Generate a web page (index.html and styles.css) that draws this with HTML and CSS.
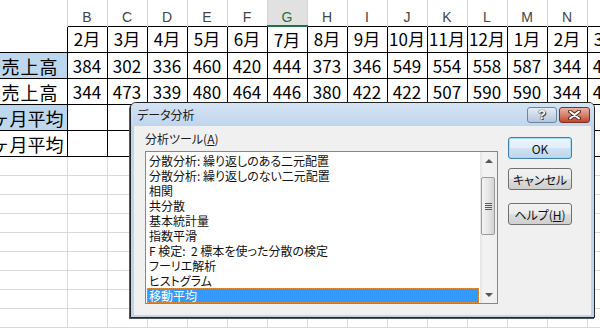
FILE: index.html
```html
<!DOCTYPE html>
<html lang="ja">
<head>
<meta charset="UTF-8" />
<title>データ分析</title>
<link rel="stylesheet" href="styles.css">
</head>
<body>

<table class="sheet">
  <colgroup><col class="col-a"><col span="14" class="col"></colgroup>
  <tr class="head">
    <th class="corner"></th><th>B</th><th>C</th><th>D</th><th>E</th><th>F</th><th class="sel">G</th><th>H</th>
    <th>I</th><th>J</th><th>K</th><th>L</th><th>M</th><th>N</th><th>O</th>
  </tr>
  <tr class="data">
    <td class="label top-open"></td><td>2月</td><td>3月</td><td>4月</td><td>5月</td><td>6月</td><td>7月</td><td>8月</td>
    <td>9月</td><td>10月</td><td>11月</td><td>12月</td><td>1月</td><td>2月</td><td>3月</td>
  </tr>
  <tr class="data">
    <td class="label fill"><div>前年売上高</div></td><td>384</td><td>302</td><td>336</td><td>460</td><td>420</td><td>444</td><td>373</td>
    <td>346</td><td>549</td><td>554</td><td>558</td><td>587</td><td>344</td><td>412</td>
  </tr>
  <tr class="data">
    <td class="label"><div>今年売上高</div></td><td>344</td><td>473</td><td>339</td><td>480</td><td>464</td><td>446</td><td>380</td>
    <td>422</td><td>422</td><td>507</td><td>590</td><td>590</td><td>344</td><td>436</td>
  </tr>
  <tr class="data">
    <td class="label avg fill"><div>3ヶ月平均</div></td><td></td><td></td><td></td><td></td><td></td><td></td><td></td>
    <td></td><td></td><td></td><td></td><td></td><td></td><td></td>
  </tr>
  <tr class="data">
    <td class="label avg"><div>6ヶ月平均</div></td><td></td><td></td><td></td><td></td><td></td><td></td><td></td>
    <td></td><td></td><td></td><td></td><td></td><td></td><td></td>
  </tr>
  <tr class="blank"><td></td><td></td><td></td><td></td><td></td><td></td><td></td><td></td><td></td><td></td><td></td><td></td><td></td><td></td><td></td></tr>
  <tr class="blank"><td></td><td></td><td></td><td></td><td></td><td></td><td></td><td></td><td></td><td></td><td></td><td></td><td></td><td></td><td></td></tr>
  <tr class="blank"><td></td><td></td><td></td><td></td><td></td><td></td><td></td><td></td><td></td><td></td><td></td><td></td><td></td><td></td><td></td></tr>
  <tr class="blank"><td></td><td></td><td></td><td></td><td></td><td></td><td></td><td></td><td></td><td></td><td></td><td></td><td></td><td></td><td></td></tr>
  <tr class="blank"><td></td><td></td><td></td><td></td><td></td><td></td><td></td><td></td><td></td><td></td><td></td><td></td><td></td><td></td><td></td></tr>
  <tr class="blank"><td></td><td></td><td></td><td></td><td></td><td></td><td></td><td></td><td></td><td></td><td></td><td></td><td></td><td></td><td></td></tr>
  <tr class="blank"><td></td><td></td><td></td><td></td><td></td><td></td><td></td><td></td><td></td><td></td><td></td><td></td><td></td><td></td><td></td></tr>
  <tr class="blank"><td></td><td></td><td></td><td></td><td></td><td></td><td></td><td></td><td></td><td></td><td></td><td></td><td></td><td></td><td></td></tr>
  <tr class="blank"><td></td><td></td><td></td><td></td><td></td><td></td><td></td><td></td><td></td><td></td><td></td><td></td><td></td><td></td><td></td></tr>
</table>

<!-- Analysis ToolPak dialog -->
<div class="dialog">
  <div class="titlebar">
    <span class="title">データ分析</span>
    <span class="tbtn help-btn">?</span>
    <span class="tbtn close-btn">
      <svg width="13" height="10" viewBox="0 0 13 10">
        <path d="M2 1.5 L11 8.5 M11 1.5 L2 8.5" stroke="#5a2a22" stroke-width="4" stroke-linecap="round"/>
        <path d="M2 1.5 L11 8.5 M11 1.5 L2 8.5" stroke="#fff" stroke-width="2" stroke-linecap="round"/>
      </svg>
    </span>
  </div>
  <div class="client">
    <div class="tools">
      <div class="tools-label">分析ツール(<u>A</u>)</div>
      <div class="listbox">
        <div class="items">
          <div class="item">分散分析: 繰り返しのある二元配置</div>
          <div class="item">分散分析: 繰り返しのない二元配置</div>
          <div class="item">相関</div>
          <div class="item">共分散</div>
          <div class="item">基本統計量</div>
          <div class="item">指数平滑</div>
          <div class="item">F 検定:&nbsp; 2 標本を使った分散の検定</div>
          <div class="item">フーリエ解析</div>
          <div class="item">ヒストグラム</div>
          <div class="item selected">移動平均</div>
        </div>
        <div class="scrollbar">
          <div class="arrow"><span class="tri up"></span></div>
          <div class="track"><div class="thumb"><span class="grip"></span></div></div>
          <div class="arrow"><span class="tri down"></span></div>
        </div>
      </div>
    </div>
    <div class="buttons">
      <div class="btn default">OK</div>
      <div class="btn">キャンセル</div>
      <div class="btn help">ヘルプ(<u>H</u>)</div>
    </div>
  </div>
</div>

</body>
</html>
```

FILE: styles.css
```css
body {
  margin: 0; width: 600px; height: 330px; overflow: hidden; position: relative;
  background: #fff; font-family: "Noto Sans CJK JP", sans-serif; color: #000;
}

/* spreadsheet */
.sheet {
  border-collapse: collapse; table-layout: fixed; width: 627px;
}
.sheet .col-a { width: 67px; }
.sheet .col { width: 40px; }
.sheet th {
  height: 15px; padding: 9px 0 0; vertical-align: top;
  font: normal 14px/16px "Liberation Sans", sans-serif; color: #444;
  border-right: 1px solid #d4d4d4;
}
.sheet th.sel {
  background: #e1e1e1; color: #217346; border-bottom: 2px solid #217346;
}
.sheet .data td {
  height: 25px; padding: 0; border: 1px solid #000;
  text-align: center; font-size: 17px; line-height: 20px; white-space: nowrap; overflow: hidden;
}
.sheet .data td.label { border-left: none; font-size: 18px; }
.sheet .data td.top-open { border-top: none; }
.sheet .data td.fill { background: #bdd7ee; }
.label div {
  display: flex; justify-content: flex-end; overflow: hidden;
  padding-right: 8px; letter-spacing: 1px;
}
.label.avg div { padding-right: 3px; letter-spacing: 0; }
.sheet .blank td {
  height: 18px; padding: 0; border-right: 1px solid #d9d9d9; border-bottom: 1px solid #d9d9d9;
}

/* dialog */
.dialog {
  position: absolute; left: 130px; top: 102px; width: 465px; height: 216px;
  box-sizing: border-box; border: 1px solid #262626; border-radius: 6px 6px 0 0;
  background: #bed4ed; display: flex; flex-direction: column; font-size: 12px;
  font-feature-settings: "palt"; box-shadow: -1px 1px 0 #555;
}
.titlebar {
  height: 23px; display: flex; align-items: center; gap: 2px; padding: 0 4px 0 6px;
  background: linear-gradient(#d5e3f3, #c0d5ed); border-radius: 5px 5px 0 0;
}
.title { flex: 1; color: #1b1b1b; }
.tbtn {
  width: 30px; height: 16px; box-sizing: border-box; border-radius: 3px;
  display: flex; align-items: center; justify-content: center;
}
.help-btn {
  border: 1px solid #71849d; color: #fff; font: bold 13px "Liberation Sans", sans-serif;
  background: linear-gradient(#e4ecf5, #cbd8e8 50%, #b5c7dd);
  text-shadow: 0 0 1px #333, 0 0 1px #333, 1px 1px 0 #445;
}
.close-btn {
  width: 31px; border: 1px solid #7c3026;
  background: linear-gradient(#eab2a5, #d8826f 50%, #c1452f);
}
.client {
  flex: 1; margin: 0 3px 2px; background: #f0f0f0;
  display: flex; gap: 10px; padding: 0 19px 0 11px;
}

.tools { width: 353px; }
.tools-label { padding-top: 4px; line-height: 18px; margin-bottom: 3px; color: #1a1a1a; }
.listbox {
  height: 153px; box-sizing: border-box; border: 1px solid #828790; background: #fff;
  display: flex;
}
.items { flex: 1; padding: 1px 1px 0 1px; }
.item {
  height: 15px; box-sizing: border-box; line-height: 13px; padding-left: 1px;
  border: 1px solid transparent; white-space: nowrap; color: #111;
}
.item.selected { background: #3399ff; color: #fff; border: 1px dotted #e69138; }

.scrollbar {
  width: 17px; display: flex; flex-direction: column;
  background: linear-gradient(to right, #e4e4e4, #f3f3f3 20%, #f0f0f0);
}
.arrow { height: 17px; display: flex; align-items: center; justify-content: center; }
.tri { width: 0; height: 0; border-left: 4px solid transparent; border-right: 4px solid transparent; }
.tri.up { border-bottom: 4px solid #555; }
.tri.down { border-top: 4px solid #555; }
.track { flex: 1; }
.thumb {
  margin: 8px 2px 0 1px; height: 58px; box-sizing: border-box;
  border: 1px solid #9a9a9a; border-radius: 2px;
  background: linear-gradient(to right, #f4f4f4, #e6e6e6 50%, #d4d4d4);
  display: flex; align-items: center; justify-content: center;
}
.grip {
  width: 7px; height: 1px; background: #5a5a5a; margin-top: -6px;
  box-shadow: 0 2px #5a5a5a, 0 4px #5a5a5a, 0 6px #5a5a5a;
}

.buttons { width: 64px; padding-top: 11px; }
.btn {
  height: 22px; box-sizing: border-box; border: 1px solid #707070; border-radius: 3px;
  background: linear-gradient(#f2f2f2, #ebebeb 50%, #dddddd 51%, #cfcfcf);
  display: flex; align-items: center; justify-content: center; color: #111;
  margin-bottom: 9px;
}
.btn.default {
  border-color: #3c7fb1; box-shadow: inset 0 0 0 1px #a7dcf5;
  background: linear-gradient(#ecf5fb, #e2eef8 50%, #cfe3f2 51%, #bcd6ea);
}
.btn.help { margin-top: 13px; }
```
